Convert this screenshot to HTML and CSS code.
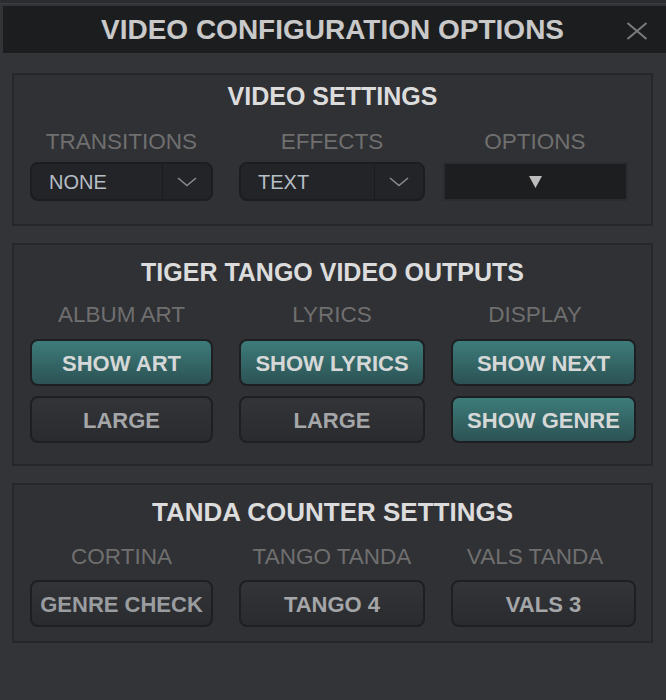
FILE: index.html
```html
<!DOCTYPE html>
<html>
<head>
<meta charset="utf-8">
<link rel="stylesheet" href="styles.css">
</head>
<body>
<div class="topstrip"></div>
<header class="titlebar">
  <h1 class="title">VIDEO CONFIGURATION OPTIONS</h1>
  <button class="close" aria-label="Close">
    <svg width="22" height="18" viewBox="0 0 22 18"><path d="M1.5 1 L20.5 17 M20.5 1 L1.5 17" stroke="#7c7c7c" stroke-width="2" fill="none"/></svg>
  </button>
</header>

<section class="panel panel-video">
  <h2 class="heading">VIDEO SETTINGS</h2>
  <div class="grid">
    <div class="label">TRANSITIONS</div>
    <div class="label">EFFECTS</div>
    <div class="label label-c3">OPTIONS</div>
    <div class="select">
      <span class="select-value">NONE</span>
      <span class="select-arrow"><svg width="20" height="10" viewBox="0 0 20 10"><path d="M1 1 L10 8.5 L19 1" stroke="#8a8a8a" stroke-width="1.6" fill="none"/></svg></span>
    </div>
    <div class="select">
      <span class="select-value">TEXT</span>
      <span class="select-arrow"><svg width="20" height="10" viewBox="0 0 20 10"><path d="M1 1 L10 8.5 L19 1" stroke="#8a8a8a" stroke-width="1.6" fill="none"/></svg></span>
    </div>
    <div class="options">
      <svg width="13" height="12" viewBox="0 0 13 12"><polygon points="0,0 13,0 6.5,12" fill="#bdbdbd"/></svg>
    </div>
  </div>
</section>

<section class="panel panel-outputs">
  <h2 class="heading">TIGER TANGO VIDEO OUTPUTS</h2>
  <div class="grid">
    <div class="label">ALBUM ART</div>
    <div class="label">LYRICS</div>
    <div class="label label-c3">DISPLAY</div>
    <button class="btn btn-on">SHOW ART</button>
    <button class="btn btn-on">SHOW LYRICS</button>
    <button class="btn btn-on">SHOW NEXT</button>
    <button class="btn btn-off">LARGE</button>
    <button class="btn btn-off">LARGE</button>
    <button class="btn btn-on">SHOW GENRE</button>
  </div>
</section>

<section class="panel panel-tanda">
  <h2 class="heading">TANDA COUNTER SETTINGS</h2>
  <div class="grid">
    <div class="label">CORTINA</div>
    <div class="label">TANGO TANDA</div>
    <div class="label label-c3">VALS TANDA</div>
    <button class="btn btn-off btn-dim">GENRE CHECK</button>
    <button class="btn btn-off">TANGO 4</button>
    <button class="btn btn-off">VALS 3</button>
  </div>
</section>
</body>
</html>
```

FILE: styles.css
```css
* { box-sizing: border-box; }

html, body {
  margin: 0;
  padding: 0;
  background: #333438;
  font-family: "Liberation Sans", Arial, sans-serif;
  width: 666px;
  height: 700px;
  overflow: hidden;
}

.topstrip {
  height: 4px;
  background: #2b2c2f;
  border-bottom: 1px solid #3c3d40;
}

.titlebar {
  position: relative;
  margin: 2px 0 0 3px;
  height: 47px;
  background: #1c1d1f;
  display: flex;
  justify-content: center;
}

.title {
  margin: 0;
  padding: 1px 4px 0 0;
  font-size: 28px;
  line-height: 46px;
  font-weight: bold;
  color: #c9c9c9;
}

.close {
  position: absolute;
  right: 18px;
  top: 16px;
  width: 22px;
  height: 18px;
  padding: 0;
  border: 0;
  background: none;
  display: block;
}
.close svg { display: block; }

.panel {
  margin: 0 13px 17px 12px;
  border: 2px solid #26272a;
  background: #303135;
  padding: 0 0 0 16px;
}

.panel-video { margin-top: 20px; padding-top: 7px; padding-bottom: 23px; }
.panel-outputs { padding-top: 13px; padding-bottom: 21px; }
.panel-tanda { padding-top: 13px; padding-bottom: 14px; }

.heading {
  margin: 0 0 0 -16px;
  text-align: center;
  font-size: 25px;
  line-height: 28px;
  font-weight: bold;
  color: #dcdcdc;
}
.panel-tanda .heading { font-size: 26px; }

.grid {
  display: grid;
  grid-template-columns: 183px 186px 185px;
  column-gap: 26px;
  row-gap: 10px;
}

.label {
  text-align: center;
  font-size: 22.5px;
  line-height: 26px;
  color: #6f6f6f;
  margin-top: 18px;
  margin-bottom: 0;
  white-space: nowrap;
}
.panel-outputs .label { margin-top: 16px; margin-bottom: 1px; }
.panel-video .label { margin-top: 19px; margin-bottom: -3px; }
.label-c3 { padding-right: 17px; }

.select {
  height: 39px;
  background: #232427;
  border: 2px solid #1c1d1f;
  border-radius: 8px;
  display: flex;
  align-items: stretch;
}
.select-value {
  flex: 1;
  display: flex;
  align-items: center;
  padding-left: 17px;
  padding-top: 1px;
  font-size: 20px;
  color: #b7bec6;
  border-right: 1px solid #1a1b1d;
}
.select-arrow {
  width: 48px;
  display: flex;
  align-items: center;
  justify-content: center;
  padding-top: 1px;
}
.select-arrow svg { display: block; }

.options {
  height: 39px;
  margin: 0 8px 0 -8px;
  background: #1d1e20;
  border: 2px solid #2b2c2f;
  display: flex;
  align-items: center;
  justify-content: center;
}
.options svg { display: block; }

.btn {
  height: 47px;
  border: 2px solid #1e1f22;
  border-radius: 8px;
  font-family: "Liberation Sans", Arial, sans-serif;
  font-weight: bold;
  font-size: 22px;
  padding: 2px 0 0;
  white-space: nowrap;
}
.btn-on {
  background: linear-gradient(#3d7c7a, #2c5254);
  color: #d6d8d8;
}
.btn-off {
  background: linear-gradient(#333438, #2a2b2f);
  color: #a4a6a8;
}
.btn-dim { color: #9a9da0; }
```
